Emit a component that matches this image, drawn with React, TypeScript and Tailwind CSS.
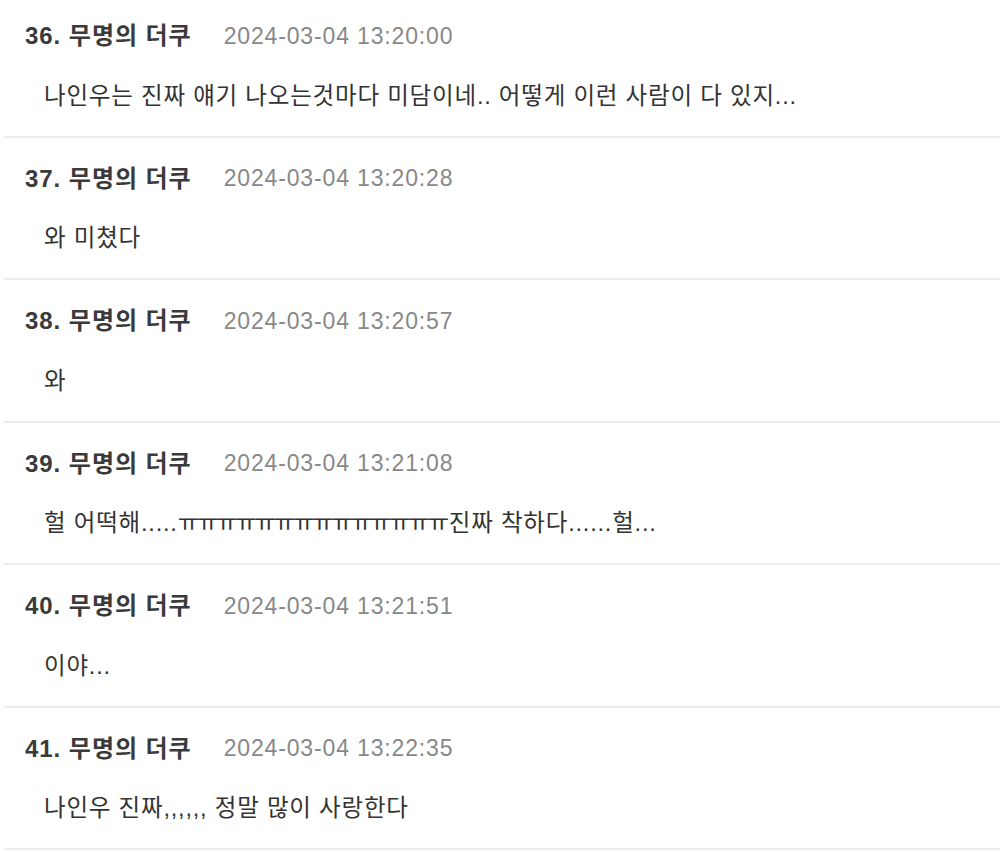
import React from "react";

const items: { n: number; t: string; b: React.ReactNode }[] = [
  { n: 36, t: "2024-03-04 13:20:00", b: "나인우는 진짜 얘기 나오는것마다 미담이네.. 어떻게 이런 사람이 다 있지..." },
  { n: 37, t: "2024-03-04 13:20:28", b: "와 미쳤다" },
  { n: 38, t: "2024-03-04 13:20:57", b: "와" },
  {
    n: 39,
    t: "2024-03-04 13:21:08",
    b: (
      <>
        헐 어떡해.....<span className="tracking-[-2.4px]">ㅠㅠㅠㅠㅠㅠㅠㅠㅠㅠㅠㅠㅠㅠ</span>
        <span className="ml-[2px]">진짜 착하다......헐...</span>
      </>
    ),
  },
  { n: 40, t: "2024-03-04 13:21:51", b: "이야..." },
  { n: 41, t: "2024-03-04 13:22:35", b: "나인우 진짜,,,,,, 정말 많이 사랑한다" },
];

export default function App() {
  return (
    <div
      className="w-[1000px] h-[852px] overflow-hidden bg-white"
      style={{ fontFamily: '"Liberation Sans", "Noto Sans CJK KR", sans-serif' }}
    >
      <div className="-mt-[5px] ml-[4px]">
        {items.map((it) => (
          <div key={it.n} className="border-b-2 border-[#ececec] pt-[25px] pb-[23px]">
            <div className="flex items-center h-[32px] pl-[21px]">
              <span className="text-[24px] font-bold text-[#3a3a3a] tracking-[0.95px] whitespace-nowrap">
                {it.n}. 무명의 더쿠
              </span>
              <span className="ml-[32px] text-[23px] text-[#888888] tracking-[0.85px] whitespace-nowrap">
                {it.t}
              </span>
            </div>
            <div className="mt-[28.5px] h-[32px] flex items-center pl-[40px] text-[23.5px] text-[#333333] tracking-[0.8px] whitespace-nowrap">
              {it.b}
            </div>
          </div>
        ))}
      </div>
    </div>
  );
}
